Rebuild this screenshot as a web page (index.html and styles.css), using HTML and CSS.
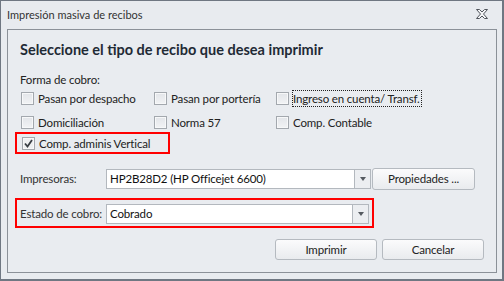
FILE: index.html
```html
<!DOCTYPE html>
<html lang="es">
<head>
    <meta charset="UTF-8">
    <title>Impresión masiva de recibos</title>
    <link rel="stylesheet" href="styles.css">
</head>
<body>
    <div class="dialog">
        <div class="titlebar">
            <span class="title">Impresión masiva de recibos</span>
            <svg class="close" width="12" height="11" viewBox="0 0 12 11">
                <polygon points="0.5,0.5 3.5,0.5 6,3 8.5,0.5 11.5,0.5 7.5,5 11.5,9.5 8.5,9.5 6,7 3.5,9.5 0.5,9.5 4.5,5" fill="#f4f5f7" stroke="#50555c" stroke-width="1"/>
            </svg>
        </div>

        <div class="panel">
            <h1>Seleccione el tipo de recibo que desea imprimir</h1>
            <p class="group">Forma de cobro:</p>

            <div class="checks">
                <label class="chk"><span class="box"></span>Pasan por despacho</label>
                <label class="chk"><span class="box"></span>Pasan por portería</label>
                <label class="chk"><span class="box"></span><span class="focus">Ingreso en cuenta/ Transf.</span></label>
                <label class="chk"><span class="box"></span>Domiciliación</label>
                <label class="chk"><span class="box"></span>Norma 57</label>
                <label class="chk"><span class="box"></span>Comp. Contable</label>
            </div>

            <div class="mark mark-check">
                <label class="chk"><span class="box checked">
                    <svg width="11" height="11" viewBox="0 0 11 11"><path d="M2 5.5 L4.5 8.5 L9 2" fill="none" stroke="#3a3f45" stroke-width="1.8"/></svg>
                </span>Comp. adminis Vertical</label>
            </div>

            <div class="field">
                <span class="lbl">Impresoras:</span>
                <div class="combo">
                    <span class="val">HP2B28D2 (HP Officejet 6600)</span>
                    <span class="drop"><i></i></span>
                </div>
                <button class="btn btn-props">Propiedades ...</button>
            </div>

            <div class="mark mark-field">
                <div class="field">
                    <span class="lbl">Estado de cobro:</span>
                    <div class="combo">
                        <span class="val">Cobrado</span>
                        <span class="drop"><i></i></span>
                    </div>
                </div>
            </div>

            <div class="actions">
                <button class="btn">Imprimir</button>
                <button class="btn">Cancelar</button>
            </div>
        </div>
    </div>
</body>
</html>
```

FILE: styles.css
```css
* {
    margin: 0;
    padding: 0;
    box-sizing: border-box;
}
body {
    font-family: Lato, "Noto Sans", sans-serif;
    font-size: 11.5px;
    letter-spacing: -0.15px;
    color: #222;
    background: #e8ebef;
}
.dialog {
    width: 504px;
    height: 281px;
    border: 1px solid #6f7782;
    border-right-width: 2px;
    border-bottom-width: 2px;
    background: #e8ebef;
    display: flex;
    flex-direction: column;
}
.titlebar {
    height: 28px;
    display: flex;
    align-items: center;
    justify-content: space-between;
    padding: 0 14px 2px 6px;
}
.title {
    font-size: 11px;
    letter-spacing: 0;
    color: #333;
}
.close {
    display: block;
}

.panel {
    flex: 1;
    margin: 0 5px 6px 6px;
    border: 1px solid #8b9198;
    background: #e9ecf0;
    padding: 10px 12px 0 12px;
    display: flex;
    flex-direction: column;
}
.panel h1 {
    font-size: 14.5px;
    letter-spacing: 0;
    line-height: 20px;
    font-weight: bold;
    color: #1f2a35;
}
.group {
    margin-top: 12px;
    line-height: 16px;
}

.checks {
    display: grid;
    grid-template-columns: 133px 122px auto;
    row-gap: 4px;
}
.chk {
    display: flex;
    align-items: center;
    height: 20px;
    white-space: nowrap;
}
.box {
    width: 13px;
    height: 13px;
    margin: 0 4px 0 1px;
    border: 1px solid #a3a8ae;
    background: linear-gradient(#e2e5e9, #f2f3f5);
    box-shadow: inset 0 0 0 1px #f7f8f9;
    display: flex;
    align-items: center;
    justify-content: center;
}
.box.checked {
    background: #eef0f2;
}
.box svg {
    display: block;
}
.focus {
    outline: 1px dotted #222;
    outline-offset: 0;
    line-height: 15px;
    padding-right: 1px;
}

.mark {
    border: 2px solid #f00;
    margin-left: -5px;
}
.mark-check {
    width: 155px;
    height: 22px;
    padding-left: 4px;
    display: flex;
    align-items: center;
}
.mark-field {
    width: 359px;
    height: 30px;
    margin-top: 9px;
    padding: 3px;
}

.field {
    display: flex;
    align-items: center;
    height: 21px;
}
.panel > .field {
    margin-top: 14px;
}
.lbl {
    width: 86px;
    flex: none;
    white-space: nowrap;
    color: #333;
}
.combo {
    width: 265px;
    height: 20px;
    border: 1px solid #b3b8be;
    background: #fff;
    display: flex;
}
.mark-field .combo {
    width: 264px;
}
.val {
    flex: 1;
    padding-left: 3px;
    line-height: 18px;
    color: #111;
}
.drop {
    width: 16px;
    border-left: 1px solid #b3b8be;
    background: #eceef1;
    display: flex;
    align-items: center;
    justify-content: center;
}
.drop i {
    width: 0;
    height: 0;
    border-left: 3.5px solid transparent;
    border-right: 3.5px solid transparent;
    border-top: 4px solid #555a60;
}

.btn {
    font-family: inherit;
    font-size: 11.5px;
    letter-spacing: -0.15px;
    color: #222;
    height: 21px;
    width: 102px;
    border: 1px solid #b5bac0;
    border-radius: 3px;
    background: linear-gradient(#fbfbfc, #e9ebee);
}
.btn-props {
    width: 103px;
    margin-left: 1px;
    height: 22px;
}
.actions {
    margin-top: 11px;
    display: flex;
    justify-content: flex-end;
    gap: 5px;
}
```
